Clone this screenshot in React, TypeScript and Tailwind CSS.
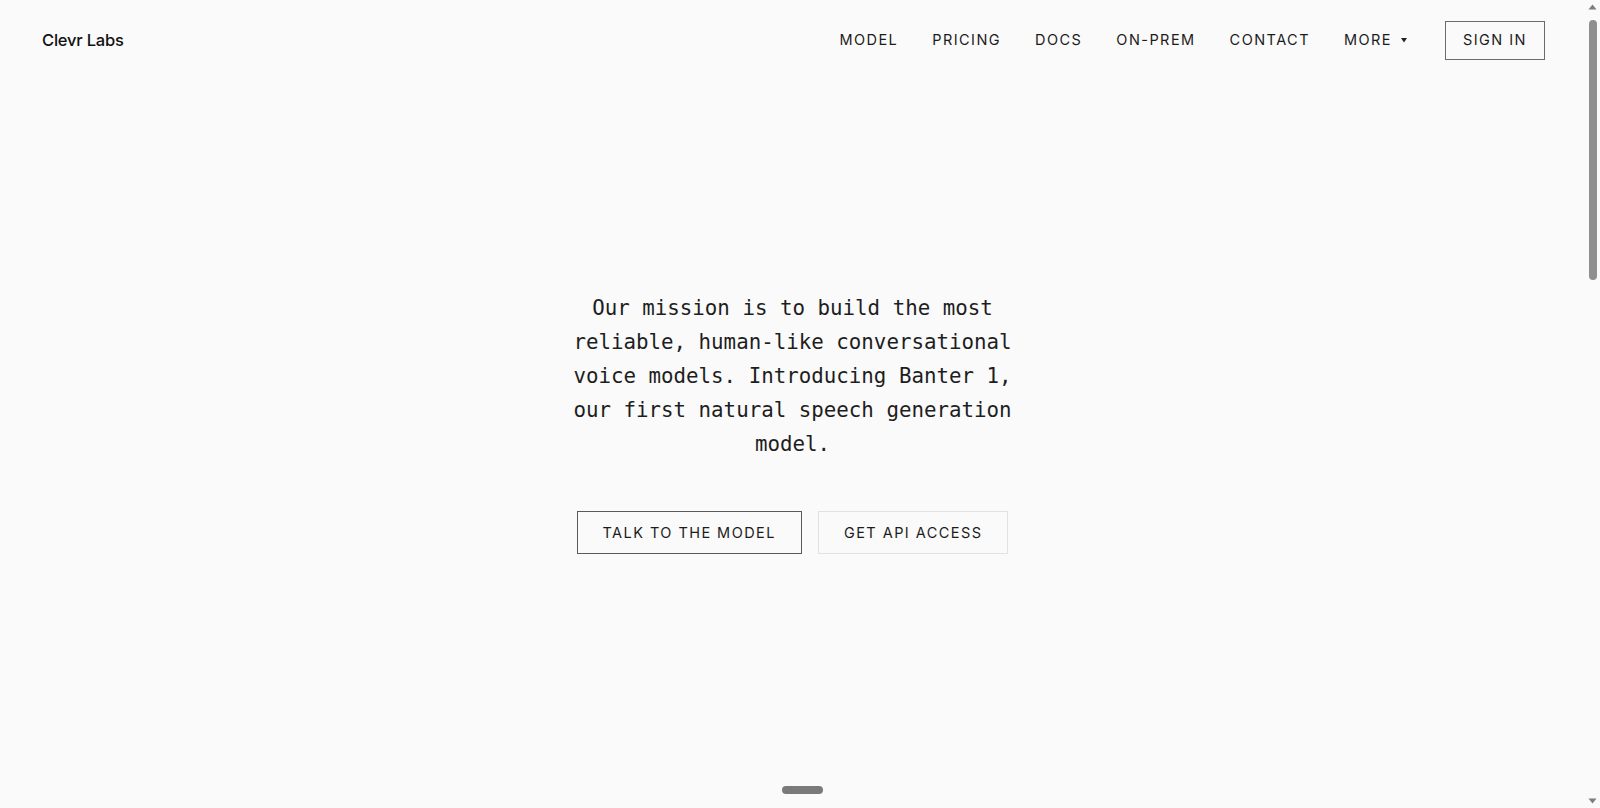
import React from "react";

const navItems = ["MODEL", "PRICING", "DOCS", "ON-PREM", "CONTACT"];

function Caret() {
  return (
    <svg width="6" height="5" viewBox="0 0 6 5" className="ml-[9px] mt-[1px]">
      <path d="M0 0 L6 0 L3 4.5 Z" fill="#222" />
    </svg>
  );
}

// Page scrollbar, as it shows in the picture
function ScrollRail() {
  return (
    <aside className="flex w-[15px] shrink-0 flex-col items-center bg-[#fafafa] py-[4px]">
      <svg width="9" height="6" viewBox="0 0 9 6">
        <path d="M0.5 5.5 L4.5 0.5 L8.5 5.5 Z" fill="#7d7d7d" />
      </svg>
      <div className="mt-[10px] h-[260px] w-[8px] rounded-full bg-[#8f8f8f]" />
      <div className="flex-1" />
      <svg width="9" height="6" viewBox="0 0 9 6">
        <path d="M0.5 0.5 L8.5 0.5 L4.5 5.5 Z" fill="#7d7d7d" />
      </svg>
    </aside>
  );
}

export default function App() {
  return (
    <div
      className="flex h-screen overflow-hidden bg-[#fafafa] text-[#1c1c1c]"
      style={{ fontFamily: "Inter, 'Noto Sans', sans-serif" }}
    >
      <main className="min-w-0 flex-1">
        {/* First screen */}
        <section className="flex h-[808px] flex-col">
          {/* Header */}
          <header className="flex h-20 items-center justify-between pl-[42px] pr-10">
            <a href="#" className="text-[16.5px] font-medium tracking-[-0.2px] text-[#111]">
              Clevr Labs
            </a>
            <nav className="flex items-center">
              <ul className="flex items-center gap-[34px] text-[14.5px] tracking-[0.1em] text-[#1c1c1c]">
                {navItems.map((item) => (
                  <li key={item}>
                    <a href="#">{item}</a>
                  </li>
                ))}
                <li className="flex items-center">
                  <a href="#">MORE</a>
                  <Caret />
                </li>
              </ul>
              <button className="ml-[38px] h-[39px] border border-[#6b6b6b] px-[17px] text-[14.5px] tracking-[0.1em] text-[#1c1c1c]">
                SIGN IN
              </button>
            </nav>
          </header>

          {/* Hero */}
          <div className="flex flex-1 flex-col items-center pt-[211px]">
            <p
              className="w-[460px] text-center text-[20.8px] leading-[34px] text-[#1e1e1e]"
              style={{ fontFamily: "'DejaVu Sans Mono', 'Liberation Mono', monospace" }}
            >
              Our mission is to build the most reliable, human-like conversational voice models.
              Introducing Banter 1, our first natural speech generation model.
            </p>
            <div className="mt-[50px] flex gap-4">
              <button className="h-[43px] border border-[#5a5a5a] px-[25px] text-[14.5px] tracking-[0.1em] text-[#1c1c1c]">
                TALK TO THE MODEL
              </button>
              <button className="h-[43px] border border-[#e2e2e2] px-[25px] text-[14.5px] tracking-[0.1em] text-[#1c1c1c]">
                GET API ACCESS
              </button>
            </div>
            <div className="flex-1" />
            <div className="mb-[14px] ml-5 h-2 w-[41px] rounded-full bg-[#7a7a7a]" />
          </div>
        </section>
      </main>
      <ScrollRail />
    </div>
  );
}
